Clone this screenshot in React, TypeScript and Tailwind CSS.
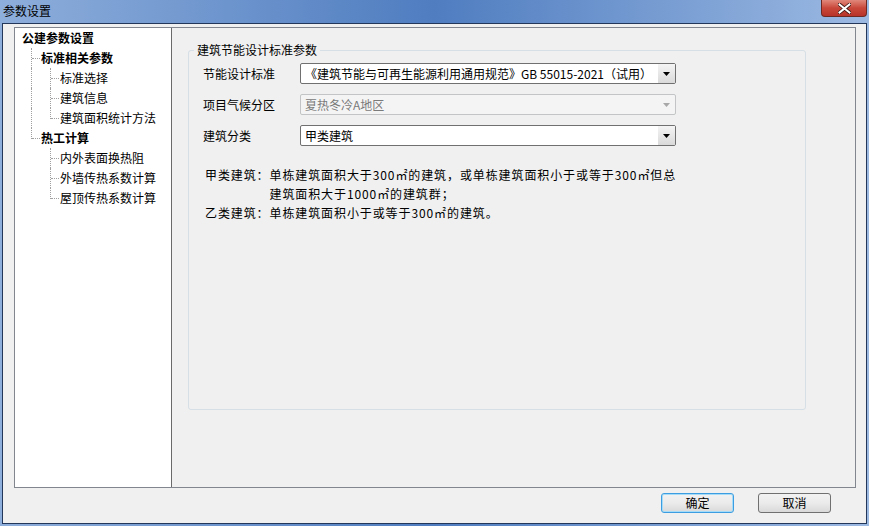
import { ReactNode } from "react";

type Guide = "line" | "tee" | "last" | "blank";

type TreeItem = {
  label: string;
  bold?: boolean;
  guides: Guide[];
};

const treeItems: TreeItem[] = [
  { label: "公建参数设置", bold: true, guides: [] },
  { label: "标准相关参数", bold: true, guides: ["tee"] },
  { label: "标准选择", guides: ["line", "tee"] },
  { label: "建筑信息", guides: ["line", "tee"] },
  { label: "建筑面积统计方法", guides: ["line", "last"] },
  { label: "热工计算", bold: true, guides: ["last"] },
  { label: "内外表面换热阻", guides: ["blank", "tee"] },
  { label: "外墙传热系数计算", guides: ["blank", "tee"] },
  { label: "屋顶传热系数计算", guides: ["blank", "last"] },
];

const GuideCell = ({ kind }: { kind: Guide }) => (
  <div className="relative w-[19px] h-[20px] shrink-0">
    {kind !== "blank" && (
      <span
        className={`absolute left-[9px] top-0 border-l border-dotted border-[#a0a0a0] ${
          kind === "last" ? "h-[11px]" : "h-[20px]"
        }`}
      />
    )}
    {(kind === "tee" || kind === "last") && (
      <span className="absolute left-[10px] top-[10px] w-[8px] border-t border-dotted border-[#a0a0a0]" />
    )}
  </div>
);

const ComboBox = ({
  value,
  disabled,
}: {
  value: ReactNode;
  disabled?: boolean;
}) => (
  <div
    className={`flex h-[21px] w-[376px] items-center rounded-[2px] border ${
      disabled
        ? "border-[#c2c4c6] bg-[#f4f4f4] text-[#7a7a7a]"
        : "border-[#707070] bg-white text-black"
    }`}
  >
    <div className="flex-1 truncate pl-[4px] leading-[19px]">{value}</div>
    <div
      className={`flex h-[19px] w-[17px] items-center justify-center ${
        disabled ? "" : "bg-gradient-to-b from-[#f4f4f4] to-[#dadada]"
      }`}
    >
      <svg width="7" height="4" viewBox="0 0 7 4">
        <path d="M0 0h7L3.5 4z" fill={disabled ? "#a8a8a8" : "#000"} />
      </svg>
    </div>
  </div>
);

const Row = ({ label, children }: { label: string; children: ReactNode }) => (
  <div className="flex items-center">
    <div className="w-[111px] pl-[14px]">{label}</div>
    {children}
  </div>
);

export default function App() {
  return (
    <div
      className="flex h-[526px] w-[869px] flex-col bg-gradient-to-r from-[#8eaedb] via-[#4f7dc0] to-[#9cb9e2] text-[12px] text-black"
      style={{ fontFamily: '"Noto Sans CJK SC", "Noto Sans", sans-serif' }}
    >
      {/* title bar */}
      <div className="flex h-[23px] shrink-0 items-start justify-between">
        <span className="pl-[3px] pt-[4px] leading-[14px]">参数设置</span>
        <div className="mr-[2px] flex h-[17px] w-[46px] items-center justify-center rounded-b-[4px] border border-t-0 border-[#6e2a22] bg-gradient-to-b from-[#e0877b] via-[#c8473a] to-[#b8332a]">
          <svg width="13" height="11" viewBox="0 0 13 11">
            <path
              d="M1.5 1.5l10 8M11.5 1.5l-10 8"
              stroke="#3b1410"
              strokeWidth="3.6"
              strokeLinecap="square"
            />
            <path
              d="M1.5 1.5l10 8M11.5 1.5l-10 8"
              stroke="#fff"
              strokeWidth="2"
              strokeLinecap="square"
            />
          </svg>
        </div>
      </div>

      {/* client */}
      <div className="mx-[2px] mb-[2px] flex flex-1 flex-col border border-[#22375a] bg-[#f0f0f0]">
        <div className="ml-[11px] mr-[10px] mt-[3px] flex h-[461px] border border-[#82878f]">
          {/* tree */}
          <div className="w-[157px] shrink-0 border-r border-[#6a6a6a] bg-white pl-[7px]">
            {treeItems.map((item) => (
              <div key={item.label} className="flex h-[20px] items-center">
                {item.guides.map((g, i) => (
                  <GuideCell key={i} kind={g} />
                ))}
                <span className={`leading-[14px] ${item.bold ? "font-bold" : ""}`}>
                  {item.label}
                </span>
              </div>
            ))}
          </div>

          {/* content pane */}
          <div className="flex-1 bg-[#f0f0f0] pl-[16px] pt-[16px]">
            <fieldset className="h-[366px] w-[618px] rounded-[3px] border border-[#d5dfe5]">
              <legend className="ml-[5px] px-[3px] leading-[12px]">建筑节能设计标准参数</legend>
              <div className="mt-[7px] flex flex-col gap-[10px]">
                <Row label="节能设计标准">
                  <ComboBox value="《建筑节能与可再生能源利用通用规范》GB 55015-2021（试用）" />
                </Row>
                <Row label="项目气候分区">
                  <ComboBox value="夏热冬冷A地区" disabled />
                </Row>
                <Row label="建筑分类">
                  <ComboBox value="甲类建筑" />
                </Row>
              </div>
              <div className="mt-[19px] pl-[16px] leading-[19px] tracking-[0.9px]">
                <div className="flex">
                  <span className="shrink-0">甲类建筑：</span>
                  <span>
                    单栋建筑面积大于300㎡的建筑，或单栋建筑面积小于或等于300㎡但总
                    <br />
                    建筑面积大于1000㎡的建筑群；
                  </span>
                </div>
                <div className="flex">
                  <span className="shrink-0">乙类建筑：</span>
                  <span>单栋建筑面积小于或等于300㎡的建筑。</span>
                </div>
              </div>
            </fieldset>
          </div>
        </div>

        {/* buttons */}
        <div className="mr-[35px] mt-[5px] flex justify-end gap-[24px]">
          <button className="h-[20px] w-[73px] rounded-[3px] border border-[#3c9ee0] bg-gradient-to-b from-[#f2f2f2] via-[#ebebeb] to-[#d9d9d9] leading-[16px] shadow-[inset_0_0_0_1px_#a6dcf7]">
            确定
          </button>
          <button className="h-[20px] w-[73px] rounded-[3px] border border-[#707070] bg-gradient-to-b from-[#f2f2f2] via-[#ebebeb] to-[#d9d9d9] leading-[16px]">
            取消
          </button>
        </div>
      </div>
    </div>
  );
}
